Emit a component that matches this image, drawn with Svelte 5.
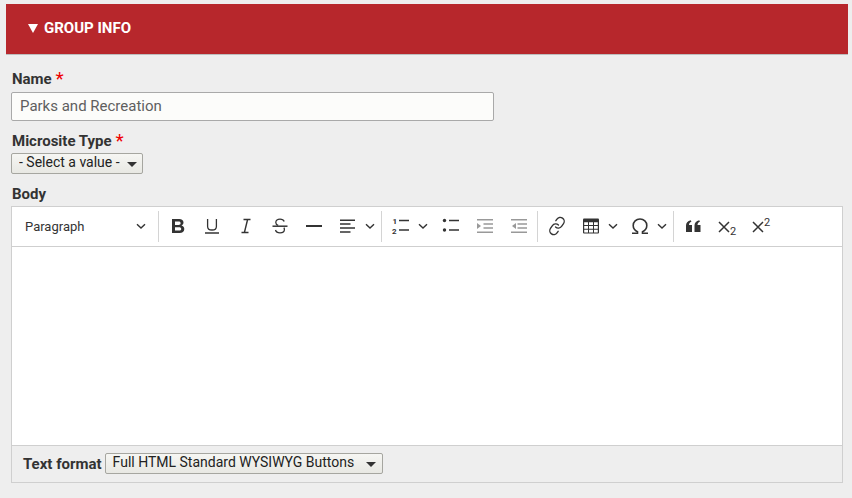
<script>
  // toolbar groups, split by separators
  const groups = [
    [
      { name: 'bold', w: 34 },
      { name: 'underline', w: 34 },
      { name: 'italic', w: 34 },
      { name: 'strike', w: 34 },
      { name: 'hr', w: 34 },
      { name: 'align', w: 50, drop: true }
    ],
    [
      { name: 'numbered', w: 50, drop: true },
      { name: 'bullet', w: 34 },
      { name: 'indent', w: 34 },
      { name: 'outdent', w: 35 }
    ],
    [
      { name: 'link', w: 34 },
      { name: 'table', w: 49, drop: true },
      { name: 'omega', w: 50, drop: true }
    ],
    [
      { name: 'quote', w: 34 },
      { name: 'sub', w: 34 },
      { name: 'sup', w: 34 }
    ]
  ];
</script>

{#snippet chevron()}
  <svg class="chev" viewBox="0 0 10 10" width="10" height="10">
    <path d="M1 3.200 5 7l4-3.800" fill="none" stroke="#333" stroke-width="1.400" />
  </svg>
{/snippet}

{#snippet icon(name)}
  <svg viewBox="0 0 20 20" width="20" height="20" class="ico">
    {#if name === 'bold'}
      <path fill="#333" fill-rule="evenodd" d="M4 3h7.200c2.600 0 4.300 1.300 4.300 3.600 0 1.400-.8 2.500-2 3 1.700.4 2.800 1.700 2.800 3.400 0 2.500-1.900 4-4.700 4H4V3Zm3 2.500v3.400h3.600c1.300 0 2-.6 2-1.700s-.7-1.700-2-1.700H7Zm0 5.800v3.200h4c1.400 0 2.200-.6 2.200-1.600 0-1-.8-1.600-2.200-1.600H7Z" />
    {:else if name === 'underline'}
      <path fill="none" stroke="#333" stroke-width="1.300" d="M5.600 3v7.400c0 2.400 1.700 3.600 4.400 3.600s4.400-1.200 4.400-3.600V3" />
      <path stroke="#333" stroke-width="1.500" d="M3 17h14" />
    {:else if name === 'italic'}
      <path fill="none" stroke="#333" stroke-width="1.400" d="M7.500 3.500h7M5.500 16.500h7M11.600 3.500 8.400 16.500" />
    {:else if name === 'strike'}
      <path fill="none" stroke="#333" stroke-width="1.300" d="M14.200 5.500C13.600 4 12 3.200 10 3.200c-2.500 0-4.200 1.300-4.200 3.200 0 1.400.8 2.400 2.400 3M5.500 14c.5 1.800 2.300 2.800 4.500 2.800 2.600 0 4.400-1.300 4.400-3.400 0-.7-.2-1.300-.5-1.800" />
      <path stroke="#333" stroke-width="1.500" d="M2.500 10.200h15" />
    {:else if name === 'hr'}
      <path stroke="#333" stroke-width="2" d="M2 10h16" />
    {:else if name === 'align'}
      <path stroke="#333" stroke-width="1.500" d="M2 4.200h15M2 8.100h10.500M2 12h15M2 15.900h10.500" />
    {:else if name === 'numbered'}
      <path stroke="#333" stroke-width="1.500" d="M8 4.500h10M8 14h10" />
      <text x="1.500" y="7.700" class="num">1</text>
      <text x="1" y="17.700" class="num">2</text>
    {:else if name === 'bullet'}
      <circle cx="3.500" cy="4.500" r="1.700" fill="#333" />
      <circle cx="3.500" cy="14" r="1.700" fill="#333" />
      <path stroke="#333" stroke-width="1.500" d="M8 4.500h10M8 14h10" />
    {:else if name === 'indent'}
      <path stroke="#999" stroke-width="1.500" d="M2 3.800h16M8.500 8h9.500M8.500 12h9.500M2 16.200h16" />
      <path fill="#999" d="M2 7l4 3-4 3z" />
    {:else if name === 'outdent'}
      <path stroke="#999" stroke-width="1.500" d="M2 3.800h16M8.500 8h9.500M8.500 12h9.500M2 16.200h16" />
      <path fill="#999" d="M7 7l-4 3 4 3z" />
    {:else if name === 'link'}
      <g transform="rotate(-10 10 10) translate(.4 .4) scale(.8)" fill="none" stroke="#333" stroke-width="1.700" stroke-linecap="round">
        <path d="M10 13a5 5 0 0 0 7.540.54l3-3a5 5 0 0 0-7.070-7.070l-1.720 1.710" />
        <path d="M14 11a5 5 0 0 0-7.540-.54l-3 3a5 5 0 0 0 7.070 7.070l1.710-1.710" />
      </g>
    {:else if name === 'table'}
      <rect x="2" y="2.500" width="16" height="15" rx="1" fill="#333" />
      <path fill="#fff" d="M3.200 6.200H7v2.800H3.200zM8 6.200h4v2.800H8zM13 6.200h3.800v2.800H13zM3.200 10H7v2.800H3.200zM8 10h4v2.800H8zM13 10h3.800v2.800H13zM3.200 13.800H7v2.600H3.200zM8 13.800h4v2.600H8zM13 13.800h3.800v2.600H13z" />
    {:else if name === 'omega'}
      <path fill="none" stroke="#333" stroke-width="1.600" d="M2 17.200h5.500v-1.400C4.800 14.500 3.200 12.300 3.200 9.500c0-3.800 2.900-6.500 6.800-6.500s6.800 2.700 6.800 6.500c0 2.800-1.600 5-4.300 6.300v1.400H18" />
    {:else if name === 'quote'}
      <path fill="#333" d="M3 16V9.500C3 7 4.500 5 7.800 4.300l.6 1.500C6.800 6.500 6 7.400 6 9h3v7H3Zm8.500 0V9.500c0-2.500 1.500-4.500 4.800-5.200l.6 1.500c-1.600.7-2.400 1.600-2.400 3.200h3v7h-6Z" />
    {:else if name === 'sub'}
      <path fill="none" stroke="#333" stroke-width="1.500" d="M2 6l10 10M12 6l-10 10" />
      <text x="13" y="19.400" class="script">2</text>
    {:else if name === 'sup'}
      <path fill="none" stroke="#333" stroke-width="1.500" d="M2 6l10 10M12 6l-10 10" />
      <text x="13" y="9.500" class="script">2</text>
    {/if}
  </svg>
{/snippet}

<main class="page">
  <header class="group-head">
    <span class="tri"></span>
    <span>GROUP INFO</span>
  </header>

  <section class="fields">
    <div class="field name">
      <label for="name">Name <span class="req">*</span></label>
      <input id="name" type="text" value="Parks and Recreation" />
    </div>

    <div class="field type">
      <label for="type">Microsite Type <span class="req">*</span></label>
      <div class="select small">
        <select id="type"><option>- Select a value -</option></select>
      </div>
    </div>

    <div class="field body">
      <label for="body">Body</label>
      <div class="editor">
        <div class="toolbar">
          <button class="para">
            <span>Paragraph</span>
            {@render chevron()}
          </button>
          {#each groups as group}
            <span class="sep"></span>
            {#each group as btn}
              <button class="tool" style="width: {btn.w}px">
                {@render icon(btn.name)}
                {#if btn.drop}{@render chevron()}{/if}
              </button>
            {/each}
          {/each}
        </div>
        <div class="content" id="body"></div>
        <div class="format">
          <label for="format">Text format</label>
          <div class="select wide">
            <select id="format"><option>Full HTML Standard WYSIWYG Buttons</option></select>
          </div>
        </div>
      </div>
    </div>
  </section>
</main>

<style>
  :global(body) {
    margin: 0;
    background: #eeeeee;
  }
  .page {
    width: 852px;
    height: 498px;
    padding: 4px 4px 0 6px;
    box-sizing: border-box;
    font-family: Roboto, "Liberation Sans", sans-serif;
    color: #333;
    overflow: hidden;
  }
  .group-head {
    height: 48px;
    box-sizing: content-box;
    background: #b7272c;
    border-bottom: 1px solid #bdbdbd;
    display: flex;
    align-items: center;
    padding-left: 22px;
    padding-bottom: 2px;
    gap: 6px;
    color: #fff;
    font-size: 15px;
    font-weight: 700;
  }
  .tri {
    width: 0;
    height: 0;
    border-left: 5px solid transparent;
    border-right: 5px solid transparent;
    border-top: 9px solid #fff;
  }
  .fields {
    padding: 15px 5px 0 5px;
  }
  .field label {
    display: block;
    font-size: 15px;
    font-weight: 700;
    line-height: 18px;
    color: #333;
  }
  .field > label {
    padding-left: 1px;
  }
  .req {
    color: #e00;
    font-size: 19px;
    line-height: 10px;
    font-weight: 400;
    vertical-align: -1px;
  }
  .name input {
    display: block;
    width: 483px;
    height: 29px;
    margin-top: 4px;
    box-sizing: border-box;
    border: 1px solid #a9a9a9;
    border-radius: 2px;
    background: #fcfcfa;
    padding: 0 8px 1px;
    font: 15px Roboto, sans-serif;
    color: #5f5f5f;
    outline: none;
  }
  .type {
    margin-top: 11px;
  }
  .select {
    position: relative;
    height: 21px;
    box-sizing: border-box;
    border: 1px solid #a6a6a0;
    border-radius: 2px;
    background: linear-gradient(#f6f6f3, #e8e8e3);
  }
  .select::after {
    content: "";
    position: absolute;
    right: 5px;
    top: 8px;
    border-left: 5px solid transparent;
    border-right: 5px solid transparent;
    border-top: 5px solid #333;
  }
  .select select {
    appearance: none;
    display: block;
    width: 100%;
    height: 100%;
    border: 0;
    background: transparent;
    padding: 0 0 3px 7px;
    font: 14px Roboto, sans-serif;
    color: #222;
    outline: none;
  }
  .select.small {
    width: 132px;
    margin-top: 3px;
  }
  .select.wide {
    width: 278px;
  }
  .select.wide::after {
    right: 6px;
  }
  .body {
    margin-top: 11px;
  }
  .body > label {
    margin-bottom: 3px;
  }
  .editor {
    width: 832px;
    box-sizing: border-box;
    border: 1px solid #cfcfcf;
  }
  .toolbar {
    height: 38px;
    background: #fff;
    border-bottom: 1px solid #cfcfcf;
    display: flex;
    align-items: center;
    padding-left: 1px;
    padding-bottom: 1px;
    box-sizing: content-box;
  }
  .para {
    width: 145px;
    height: 30px;
    display: flex;
    align-items: center;
    justify-content: space-between;
    padding: 0 12px 0 12px;
    border: 0;
    background: none;
    font: 13px Roboto, sans-serif;
    color: #333;
    box-sizing: border-box;
  }
  .sep {
    width: 1px;
    height: 31px;
    background: #d4d4d4;
    margin: 0 2px 0 0;
  }
  .tool {
    height: 30px;
    padding: 0 0 0 7px;
    border: 0;
    background: none;
    display: flex;
    align-items: center;
    gap: 2px;
    box-sizing: border-box;
    flex: none;
  }
  .ico {
    flex: none;
    display: block;
    overflow: visible;
  }
  .ico .num {
    font: 700 8px Roboto, sans-serif;
    fill: #333;
  }
  .ico .script {
    font: 11px Roboto, sans-serif;
    fill: #333;
  }
  .chev {
    flex: none;
    display: block;
    margin-left: 5px;
  }
  .content {
    height: 198px;
    background: #fff;
  }
  .format {
    height: 37px;
    border-top: 1px solid #cfcfcf;
    display: flex;
    align-items: center;
    gap: 3px;
    padding-left: 11px;
    padding-bottom: 1px;
    box-sizing: border-box;
    background: #eee;
  }
  .format label {
    white-space: nowrap;
  }
</style>
